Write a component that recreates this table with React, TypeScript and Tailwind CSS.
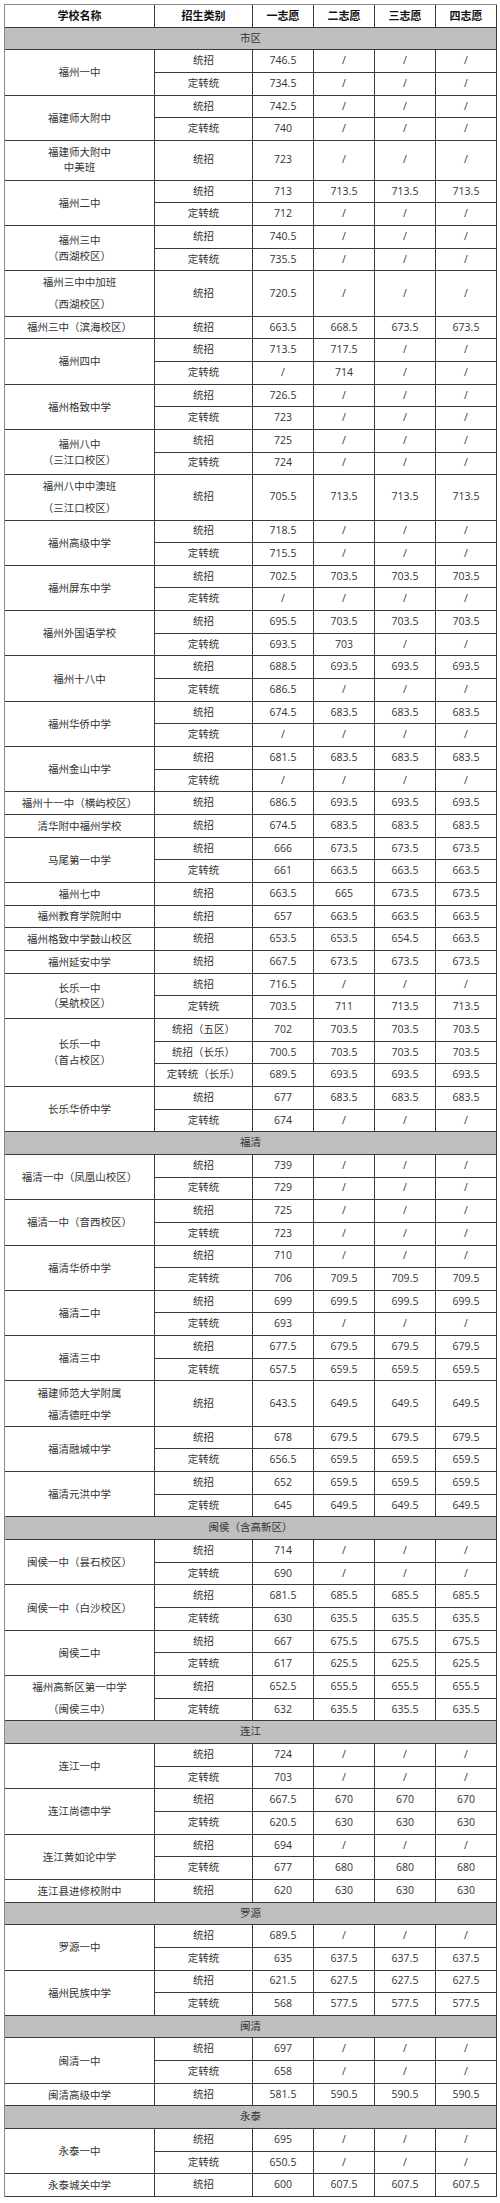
import React from "react";

type Row = [string, string, string, string, string];
type School = { name: string; rows: Row[]; h?: string; lh?: string };
type Section = { title: string; schools: School[] };

const S = "/";

const data: Section[] = [
  {
    title: "市区",
    schools: [
      { name: "福州一中", rows: [["统招", "746.5", S, S, S], ["定转统", "734.5", S, S, S]] },
      { name: "福建师大附中", rows: [["统招", "742.5", S, S, S], ["定转统", "740", S, S, S]] },
      { name: "福建师大附中\n中美班", rows: [["统招", "723", S, S, S]], h: "h-[39.7px]", lh: "leading-[15px]" },
      { name: "福州二中", rows: [["统招", "713", "713.5", "713.5", "713.5"], ["定转统", "712", S, S, S]] },
      { name: "福州三中\n（西湖校区）", rows: [["统招", "740.5", S, S, S], ["定转统", "735.5", S, S, S]], lh: "leading-[16px]" },
      { name: "福州三中中加班\n（西湖校区）", rows: [["统招", "720.5", S, S, S]], h: "h-[45.33px]", lh: "leading-[22px]" },
      { name: "福州三中（滨海校区）", rows: [["统招", "663.5", "668.5", "673.5", "673.5"]] },
      { name: "福州四中", rows: [["统招", "713.5", "717.5", S, S], ["定转统", S, "714", S, S]] },
      { name: "福州格致中学", rows: [["统招", "726.5", S, S, S], ["定转统", "723", S, S, S]] },
      { name: "福州八中\n（三江口校区）", rows: [["统招", "725", S, S, S], ["定转统", "724", S, S, S]], lh: "leading-[16px]" },
      { name: "福州八中中澳班\n（三江口校区）", rows: [["统招", "705.5", "713.5", "713.5", "713.5"]], h: "h-[45.33px]", lh: "leading-[22px]" },
      { name: "福州高级中学", rows: [["统招", "718.5", S, S, S], ["定转统", "715.5", S, S, S]] },
      { name: "福州屏东中学", rows: [["统招", "702.5", "703.5", "703.5", "703.5"], ["定转统", S, S, S, S]] },
      { name: "福州外国语学校", rows: [["统招", "695.5", "703.5", "703.5", "703.5"], ["定转统", "693.5", "703", S, S]] },
      { name: "福州十八中", rows: [["统招", "688.5", "693.5", "693.5", "693.5"], ["定转统", "686.5", S, S, S]] },
      { name: "福州华侨中学", rows: [["统招", "674.5", "683.5", "683.5", "683.5"], ["定转统", S, S, S, S]] },
      { name: "福州金山中学", rows: [["统招", "681.5", "683.5", "683.5", "683.5"], ["定转统", S, S, S, S]] },
      { name: "福州十一中（横屿校区）", rows: [["统招", "686.5", "693.5", "693.5", "693.5"]] },
      { name: "清华附中福州学校", rows: [["统招", "674.5", "683.5", "683.5", "683.5"]] },
      { name: "马尾第一中学", rows: [["统招", "666", "673.5", "673.5", "673.5"], ["定转统", "661", "663.5", "663.5", "663.5"]] },
      { name: "福州七中", rows: [["统招", "663.5", "665", "673.5", "673.5"]] },
      { name: "福州教育学院附中", rows: [["统招", "657", "663.5", "663.5", "663.5"]] },
      { name: "福州格致中学鼓山校区", rows: [["统招", "653.5", "653.5", "654.5", "663.5"]] },
      { name: "福州延安中学", rows: [["统招", "667.5", "673.5", "673.5", "673.5"]] },
      { name: "长乐一中\n（吴航校区）", rows: [["统招", "716.5", S, S, S], ["定转统", "703.5", "711", "713.5", "713.5"]], lh: "leading-[15px]" },
      {
        name: "长乐一中\n（首占校区）",
        rows: [
          ["统招（五区）", "702", "703.5", "703.5", "703.5"],
          ["统招（长乐）", "700.5", "703.5", "703.5", "703.5"],
          ["定转统（长乐）", "689.5", "693.5", "693.5", "693.5"],
        ],
        lh: "leading-[16px]",
      },
      { name: "长乐华侨中学", rows: [["统招", "677", "683.5", "683.5", "683.5"], ["定转统", "674", S, S, S]] },
    ],
  },
  {
    title: "福清",
    schools: [
      { name: "福清一中（凤凰山校区）", rows: [["统招", "739", S, S, S], ["定转统", "729", S, S, S]] },
      { name: "福清一中（音西校区）", rows: [["统招", "725", S, S, S], ["定转统", "723", S, S, S]] },
      { name: "福清华侨中学", rows: [["统招", "710", S, S, S], ["定转统", "706", "709.5", "709.5", "709.5"]] },
      { name: "福清二中", rows: [["统招", "699", "699.5", "699.5", "699.5"], ["定转统", "693", S, S, S]] },
      { name: "福清三中", rows: [["统招", "677.5", "679.5", "679.5", "679.5"], ["定转统", "657.5", "659.5", "659.5", "659.5"]] },
      { name: "福建师范大学附属\n福清德旺中学", rows: [["统招", "643.5", "649.5", "649.5", "649.5"]], h: "h-[45.33px]", lh: "leading-[22px]" },
      { name: "福清融城中学", rows: [["统招", "678", "679.5", "679.5", "679.5"], ["定转统", "656.5", "659.5", "659.5", "659.5"]] },
      { name: "福清元洪中学", rows: [["统招", "652", "659.5", "659.5", "659.5"], ["定转统", "645", "649.5", "649.5", "649.5"]] },
    ],
  },
  {
    title: "闽侯（含高新区）",
    schools: [
      { name: "闽侯一中（昙石校区）", rows: [["统招", "714", S, S, S], ["定转统", "690", S, S, S]] },
      { name: "闽侯一中（白沙校区）", rows: [["统招", "681.5", "685.5", "685.5", "685.5"], ["定转统", "630", "635.5", "635.5", "635.5"]] },
      { name: "闽侯二中", rows: [["统招", "667", "675.5", "675.5", "675.5"], ["定转统", "617", "625.5", "625.5", "625.5"]] },
      { name: "福州高新区第一中学\n（闽侯三中）", rows: [["统招", "652.5", "655.5", "655.5", "655.5"], ["定转统", "632", "635.5", "635.5", "635.5"]], lh: "leading-[22px]" },
    ],
  },
  {
    title: "连江",
    schools: [
      { name: "连江一中", rows: [["统招", "724", S, S, S], ["定转统", "703", S, S, S]] },
      { name: "连江尚德中学", rows: [["统招", "667.5", "670", "670", "670"], ["定转统", "620.5", "630", "630", "630"]] },
      { name: "连江黄如论中学", rows: [["统招", "694", S, S, S], ["定转统", "677", "680", "680", "680"]] },
      { name: "连江县进修校附中", rows: [["统招", "620", "630", "630", "630"]] },
    ],
  },
  {
    title: "罗源",
    schools: [
      { name: "罗源一中", rows: [["统招", "689.5", S, S, S], ["定转统", "635", "637.5", "637.5", "637.5"]] },
      { name: "福州民族中学", rows: [["统招", "621.5", "627.5", "627.5", "627.5"], ["定转统", "568", "577.5", "577.5", "577.5"]] },
    ],
  },
  {
    title: "闽清",
    schools: [
      { name: "闽清一中", rows: [["统招", "697", S, S, S], ["定转统", "658", S, S, S]] },
      { name: "闽清高级中学", rows: [["统招", "581.5", "590.5", "590.5", "590.5"]] },
    ],
  },
  {
    title: "永泰",
    schools: [
      { name: "永泰一中", rows: [["统招", "695", S, S, S], ["定转统", "650.5", S, S, S]] },
      { name: "永泰城关中学", rows: [["统招", "600", "607.5", "607.5", "607.5"]] },
    ],
  },
];

const cell = "flex items-center justify-center border-r border-b border-[#3a3a3a]";

function SchoolBlock({ s }: { s: School }) {
  return (
    <div className="grid grid-cols-[150px_1fr]">
      <div className={`${cell} whitespace-pre-line text-center ${s.lh ?? "leading-[16px]"}`}>{s.name}</div>
      <div className="flex flex-col">
        {s.rows.map((r, i) => (
          <div key={i} className={`grid grid-cols-[98px_61px_61px_61px_61px] ${s.h ?? "h-[22.67px]"}`}>
            {r.map((v, j) => (
              <div key={j} className={cell}>
                {v}
              </div>
            ))}
          </div>
        ))}
      </div>
    </div>
  );
}

export default function App() {
  return (
    <div className="min-h-[2203px] bg-white pt-1 pl-1 text-[10.5px] text-[#333] [font-family:'Open_Sans','Noto_Sans_CJK_SC',sans-serif]">
      <div className="w-[493px] border-l border-t border-[#8a8a8a]">
        <div className="grid h-[22.67px] grid-cols-[150px_98px_61px_61px_61px_61px] text-[11px] font-bold text-[#111]">
          {["学校名称", "招生类别", "一志愿", "二志愿", "三志愿", "四志愿"].map((h) => (
            <div key={h} className={cell}>
              {h}
            </div>
          ))}
        </div>
        {data.map((sec) => (
          <div key={sec.title}>
            <div className={`${cell} h-[22.67px] bg-[#bfbfbf]`}>{sec.title}</div>
            {sec.schools.map((s) => (
              <SchoolBlock key={s.name} s={s} />
            ))}
          </div>
        ))}
      </div>
    </div>
  );
}
